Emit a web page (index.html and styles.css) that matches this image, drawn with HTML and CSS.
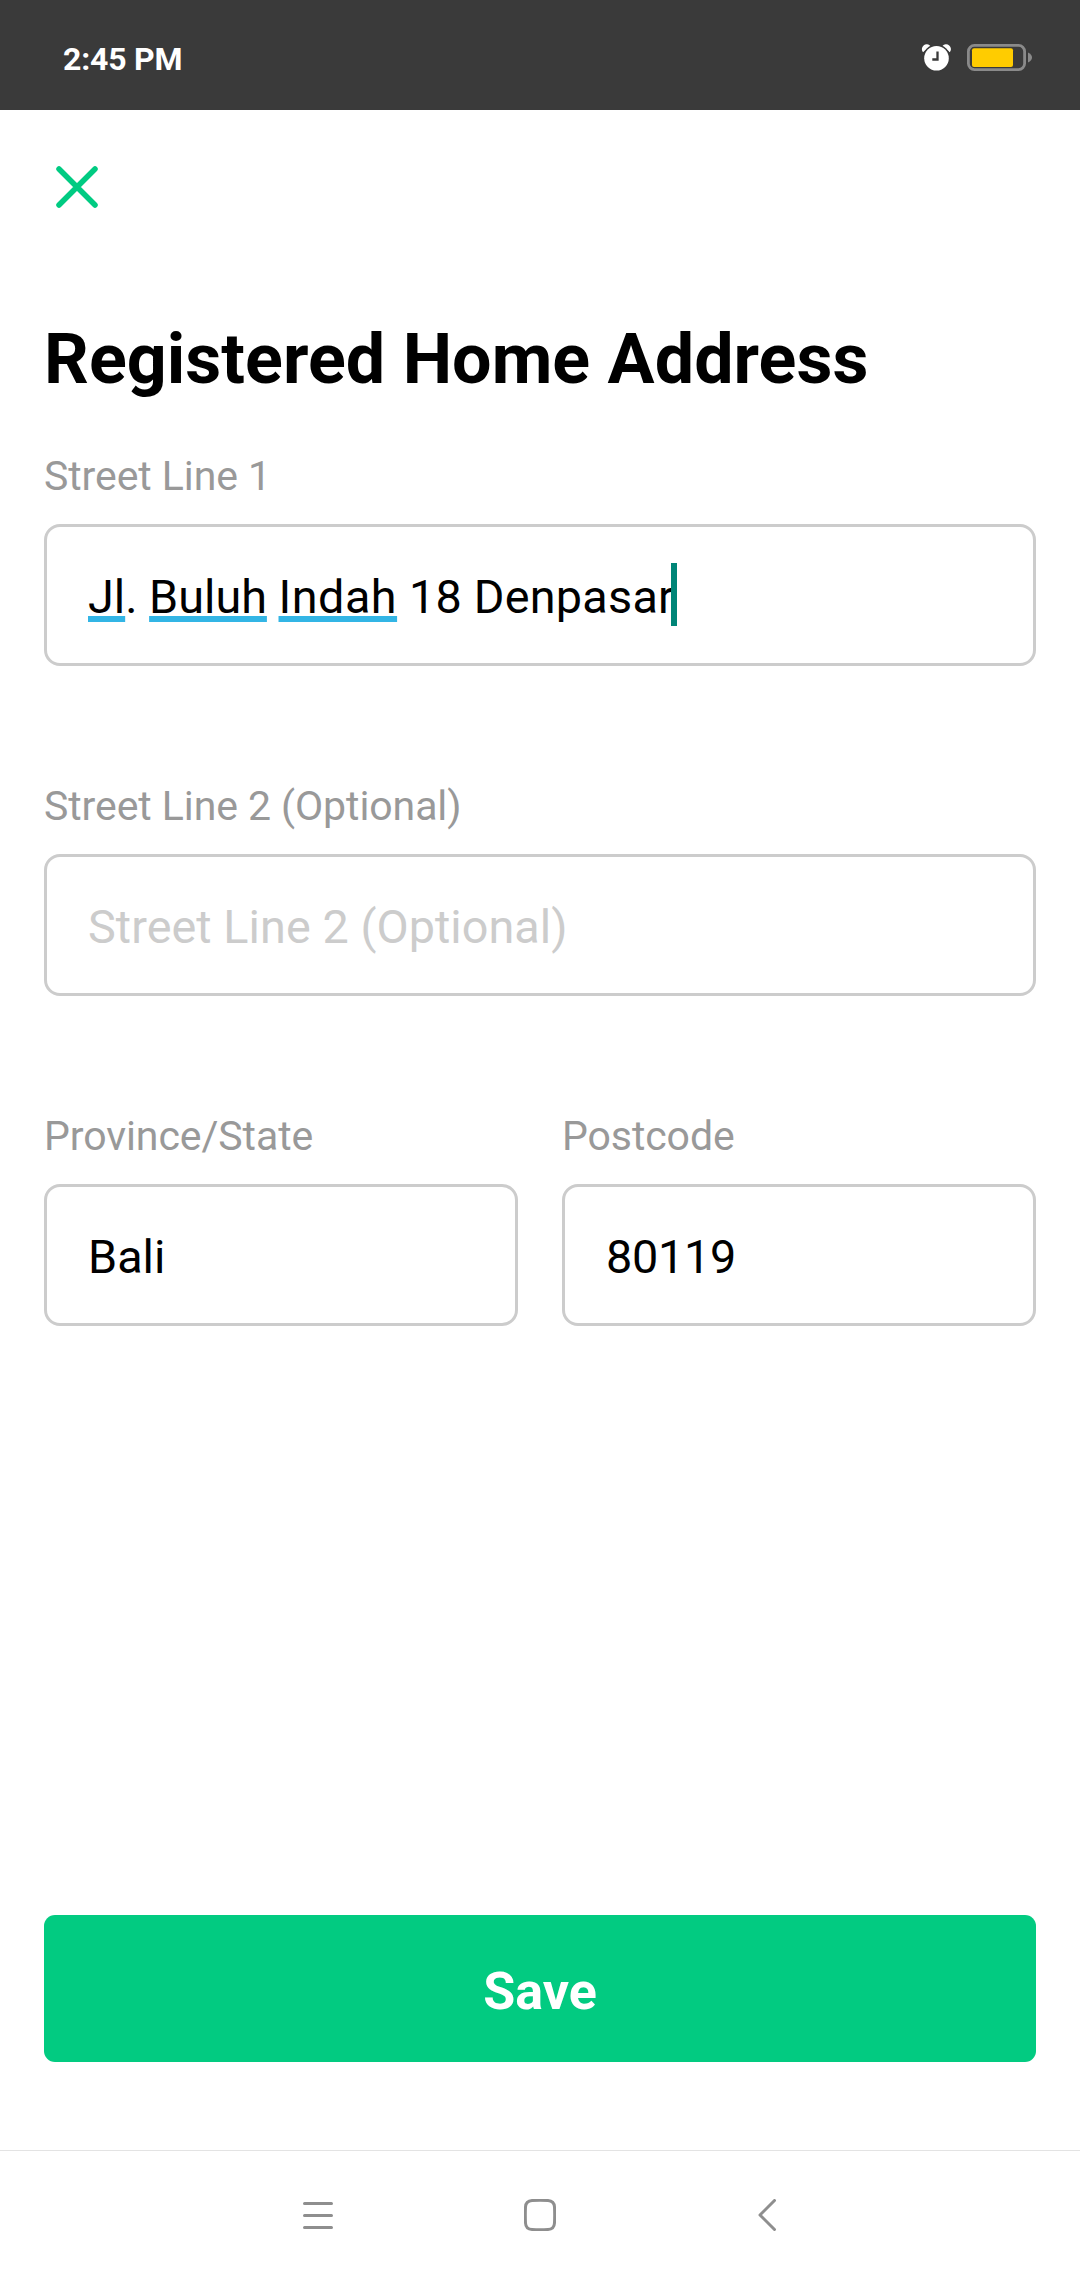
FILE: index.html
```html
<!DOCTYPE html>
<html lang="en">
<head>
<meta charset="utf-8">
<title>Registered Home Address</title>
<link rel="stylesheet" href="styles.css">
</head>
<body>
<div class="screen">
  <header class="status-bar">
    <span class="clock">2:45 PM</span>
    <svg class="status-icons" width="112" height="32" viewBox="0 0 112 32" aria-hidden="true">
      <g fill="#fff">
        <path d="M3 12.2a4.600 4.600 0 0 1 7.400-6.200zM29.800 12.200a4.600 4.600 0 0 0-7.400-6.200z"/>
        <circle cx="16.500" cy="18.200" r="13.800" fill="#3a3a3a"/>
        <circle cx="16.500" cy="18.200" r="12.300"/>
      </g>
      <path d="M17.500 11.500v8h-5.200" fill="none" stroke="#3a3a3a" stroke-width="2.300"/>
      <rect x="48.400" y="5.400" width="56.200" height="24.200" rx="6" fill="none" stroke="#8a8a8a" stroke-width="2.800"/>
      <rect x="52" y="8.200" width="41" height="18.800" rx="2" fill="#fc0"/>
      <path d="M108 12.500q4 2 4 5t-4 5z" fill="#8a8a8a"/>
    </svg>
  </header>

  <main class="content">
    <button class="close" type="button" aria-label="Close">
      <svg width="42" height="42" viewBox="0 0 42 42"><path d="M3 3l36 36M39 3L3 39" stroke="#00cb82" stroke-width="5.500" stroke-linecap="round"/></svg>
    </button>
    <h1 class="title">Registered Home Address</h1>
    <form class="form">
      <div class="field">
        <div class="label">Street Line 1</div>
        <div class="input"><span class="value"><span class="spell">Jl</span>. <span class="spell">Buluh</span> <span class="spell wide">Indah</span><span class="tail"> 18 Denpasar</span><i class="caret"></i></span></div>
      </div>
      <div class="field">
        <div class="label">Street Line 2 (Optional)</div>
        <div class="input"><span class="placeholder">Street Line 2 (Optional)</span></div>
      </div>
      <div class="row">
        <div class="field">
          <div class="label">Province/State</div>
          <div class="input"><span class="value">Bali</span></div>
        </div>
        <div class="field">
          <div class="label">Postcode</div>
          <div class="input"><span class="value digits">80119</span></div>
        </div>
      </div>
    </form>
    <button class="save" type="button">Save</button>
  </main>

  <nav class="nav-bar">
    <svg width="32" height="32" viewBox="0 0 32 32"><path d="M2.500 4.500h27M2.500 16.500h27M2.500 28.500h27" stroke="#8e8e8e" stroke-width="3" stroke-linecap="round"/></svg>
    <svg width="32" height="32" viewBox="0 0 32 32"><path d="M8 1.500Q16 1.100 24 1.500Q30.200 1.800 30.500 8Q30.900 16 30.500 24Q30.200 30.200 24 30.500Q16 30.900 8 30.500Q1.800 30.200 1.500 24Q1.100 16 1.500 8Q1.800 1.800 8 1.500Z" fill="none" stroke="#8e8e8e" stroke-width="3"/></svg>
    <svg width="32" height="32" viewBox="0 0 32 32"><path d="M28.500 1.500L14 16l14.500 14.500" fill="none" stroke="#8e8e8e" stroke-width="3" stroke-linecap="round" stroke-linejoin="round"/></svg>
  </nav>
</div>
</body>
</html>
```
FILE: styles.css
```css
* {
  box-sizing: border-box;
}

body {
  margin: 0;
  background: #fff;
  font-family: Roboto, sans-serif;
  color: #000;
}

.screen {
  display: flex;
  flex-direction: column;
  width: 1080px;
  height: 2280px;
}

.status-bar {
  display: flex;
  justify-content: space-between;
  height: 110px;
  padding: 40px 48px 0 63px;
  background: #3a3a3a;
}

.clock {
  font-size: 32px;
  line-height: 38px;
  font-weight: 700;
  letter-spacing: -0.2px;
  color: #fff;
}

.content {
  display: flex;
  flex: 1;
  flex-direction: column;
  padding: 56px 44px 88px;
}

.close {
  align-self: flex-start;
  width: 42px;
  height: 42px;
  margin-left: 12px;
  padding: 0;
  border: 0;
  background: none;
}

.close svg {
  display: block;
}

.title {
  margin: 109px 0 0;
  font-size: 70px;
  line-height: 84px;
  font-weight: 700;
  letter-spacing: 0.04px;
  white-space: nowrap;
}

.form {
  display: flex;
  flex-direction: column;
  gap: 115px;
  margin-top: 50px;
}

.row {
  display: grid;
  grid-template-columns: 1fr 1fr;
  gap: 44px;
}

.label {
  height: 73px;
  padding-top: 1px;
  font-size: 41px;
  line-height: 48px;
  letter-spacing: -0.08px;
  color: #999;
}

.input {
  display: flex;
  align-items: center;
  height: 142px;
  padding: 4px 41px 0;
  border: 3px solid #ccc;
  border-radius: 16px;
  font-size: 46.75px;
  line-height: 56px;
  white-space: nowrap;
}

.value {
  position: relative;
}

.placeholder {
  letter-spacing: 0.06px;
  color: #ccc;
}

.spell {
  text-decoration: underline #33b5e5 6px;
  text-decoration-skip-ink: none;
  text-underline-offset: 3px;
}

.wide {
  letter-spacing: 0.5px;
}

.tail {
  letter-spacing: 0.25px;
  white-space: pre;
}

.digits {
  letter-spacing: -0.3px;
}

.caret {
  position: absolute;
  top: -6px;
  right: -3px;
  width: 6px;
  height: 63px;
  background: #008577;
}

.save {
  height: 147px;
  margin-top: auto;
  padding: 7px 0 0;
  border: 0;
  border-radius: 11px;
  background: #02cb81;
  color: #fff;
  font: 700 52px/62px Roboto, sans-serif;
}

.nav-bar {
  display: flex;
  justify-content: center;
  gap: 190px;
  height: 130px;
  padding-top: 48px;
  border-top: 1px solid #e3e3e3;
}
```
